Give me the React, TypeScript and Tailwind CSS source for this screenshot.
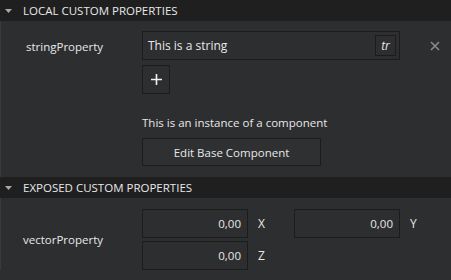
import React from "react";

const font = { fontFamily: '"Open Sans", "Noto Sans", sans-serif' };

const SectionHeader: React.FC<{ title: string }> = ({ title }) => (
  <div className="flex h-[21px] items-center bg-[#1f1f1f] text-[11.5px] text-[#e8e8e8]">
    <svg width="23" height="21" viewBox="0 0 23 21" className="shrink-0">
      <path d="M5 9 L12 9 L8.5 13 Z" fill="#a8a8a8" />
    </svg>
    <span>{title}</span>
  </div>
);

const NumberField: React.FC<{ value: string; axis: string }> = ({ value, axis }) => (
  <div className="flex items-center">
    <div className="flex h-[29px] w-[106px] items-center justify-end border border-[#1c1c1c] pr-[6px] text-[11.5px] text-[#e8e8e8]">
      {value}
    </div>
    <span className="ml-[10px] w-[8px] text-[12px] text-[#e8e8e8]">{axis}</span>
  </div>
);

export default function App() {
  return (
    <div className="h-[280px] w-[451px] overflow-hidden bg-[#2d2e30]" style={font}>
      <SectionHeader title="LOCAL CUSTOM PROPERTIES" />

      <div className="border-l border-[#3a3a3a] pb-[11px]">
        <div className="flex pt-[10px]">
          <div className="w-[141px] pl-[25px] pt-[7px] text-[11.5px] text-[#e8e8e8]">
            stringProperty
          </div>
          <div className="flex flex-col">
            <div className="flex items-center">
              <div className="flex h-[29px] w-[258px] items-center justify-between border border-[#1c1c1c] pl-[5px] pr-[3px] text-[12px] text-[#e8e8e8]">
                <span>This is a string</span>
                <div className="flex h-[21px] w-[21px] items-center justify-center border border-[#1c1c1c] text-[12px] italic">
                  tr
                </div>
              </div>
              <svg width="10" height="10" viewBox="0 0 10 10" className="ml-[30px]">
                <path d="M1 1 L9 9 M9 1 L1 9" stroke="#8a8a8a" strokeWidth="1.6" />
              </svg>
            </div>
            <button className="mt-[5px] flex h-[29px] w-[28px] items-center justify-center border border-[#1c1c1c]">
              <svg width="11" height="11" viewBox="0 0 11 11">
                <path d="M5.5 0 V11 M0 5.5 H11" stroke="#f0f0f0" strokeWidth="1.6" />
              </svg>
            </button>
            <div className="mt-[20px] text-[11.5px] text-[#e8e8e8]">
              This is an instance of a component
            </div>
            <button className="mt-[7px] flex h-[28px] w-[179px] items-center justify-center border border-[#1c1c1c] bg-[#2f3032] text-[11.5px] text-[#e8e8e8]">
              Edit Base Component
            </button>
          </div>
        </div>
      </div>

      <SectionHeader title="EXPOSED CUSTOM PROPERTIES" />

      <div className="flex border-l border-[#3a3a3a] pt-[11px]">
        <div className="flex w-[141px] items-center pl-[22px] text-[11.5px] text-[#e8e8e8]">
          vectorProperty
        </div>
        <div className="flex flex-col gap-[3px]">
          <div className="flex">
            <NumberField value="0,00" axis="X" />
            <div className="ml-[28px]">
              <NumberField value="0,00" axis="Y" />
            </div>
          </div>
          <NumberField value="0,00" axis="Z" />
        </div>
      </div>
    </div>
  );
}
